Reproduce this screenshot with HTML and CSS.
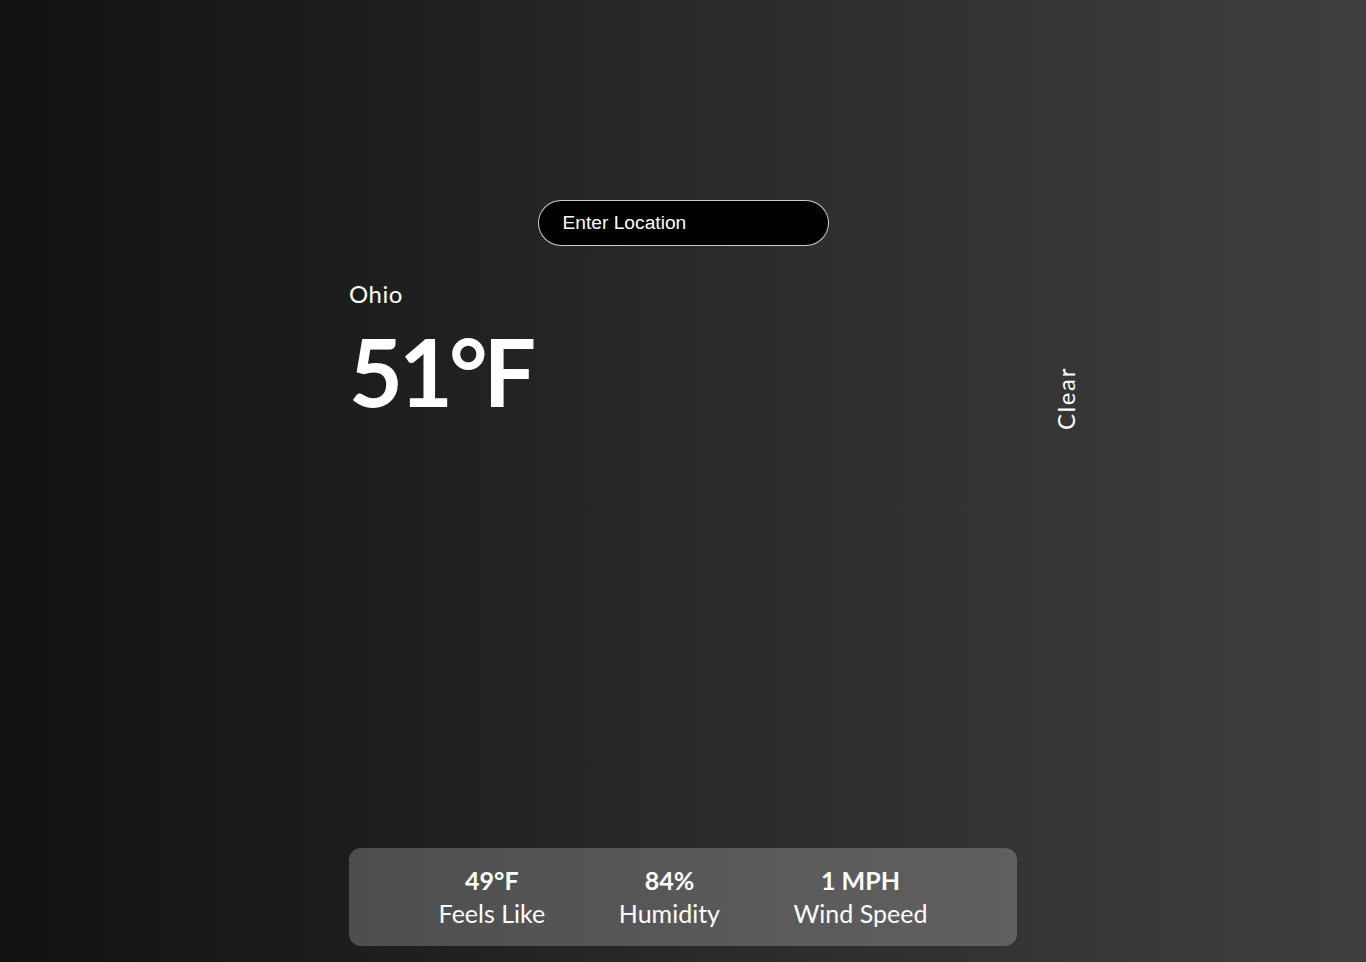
FILE: index.html
```html
<!DOCTYPE html>
<html lang="en">
<head>
<meta charset="utf-8">
<title>Weather</title>
<link rel="stylesheet" href="styles.css">
</head>
<body>
<div class="app">
  <div class="container">
    <div class="search">
      <input class="search-input" type="text" placeholder="Enter Location">
    </div>
    <div class="top">
      <div class="main">
        <p class="location">Ohio</p>
        <h1 class="temp">51°F</h1>
      </div>
      <div class="description">
        <p>Clear</p>
      </div>
    </div>
    <div class="bottom">
      <div class="stat">
        <p class="value">49°F</p>
        <p class="label">Feels Like</p>
      </div>
      <div class="stat">
        <p class="value">84%</p>
        <p class="label">Humidity</p>
      </div>
      <div class="stat">
        <p class="value">1 MPH</p>
        <p class="label">Wind Speed</p>
      </div>
    </div>
  </div>
</div>
</body>
</html>
```

FILE: styles.css
```css
* {
  box-sizing: border-box;
}

html, body {
  margin: 0;
  padding: 0;
  height: 100%;
}

body {
  background: linear-gradient(to right, #111111 0%, #1f1f1f 30%, #2e2e2e 60%, #403f3f 100%);
  color: #ffffff;
  font-family: Lato, "Open Sans", sans-serif;
  overflow: hidden;
}

.app {
  height: 100vh;
  display: flex;
  justify-content: center;
}

.container {
  width: 668px;
  height: 100%;
  display: flex;
  flex-direction: column;
  padding: 200px 0 16px;
}

.search {
  display: flex;
  justify-content: center;
}

.search-input {
  width: 291px;
  height: 46px;
  padding: 0 24px;
  border-radius: 25px;
  border: 1px solid rgba(255, 255, 255, 0.8);
  background: #000000;
  color: #ffffff;
  font-family: "Liberation Sans", Arial, sans-serif;
  font-size: 19.2px;
  outline: none;
}

.search-input::placeholder {
  color: #ffffff;
  opacity: 1;
}

.top {
  display: flex;
  align-items: flex-start;
  margin-top: 33px;
  flex: 1;
}

.main {
  flex: 1;
}

.location {
  margin: 0;
  font-size: 24px;
  line-height: 29px;
  letter-spacing: 0.5px;
}

.temp {
  margin: 7px 0 0;
  font-size: 93px;
  font-weight: 700;
  line-height: 112px;
  letter-spacing: -4px;
}

.description {
  margin-right: -63px;
  margin-top: 88px;
}

.description p {
  margin: 0;
  writing-mode: vertical-rl;
  transform: rotate(180deg);
  font-size: 24px;
  line-height: 29px;
  letter-spacing: 1.6px;
}

.bottom {
  display: flex;
  justify-content: space-evenly;
  padding: 16px;
  border-radius: 12px;
  background: rgba(255, 255, 255, 0.22);
  text-align: center;
}

.stat p {
  margin: 0;
  line-height: 33px;
  font-size: 25px;
}

.value {
  font-weight: 700;
}
```
